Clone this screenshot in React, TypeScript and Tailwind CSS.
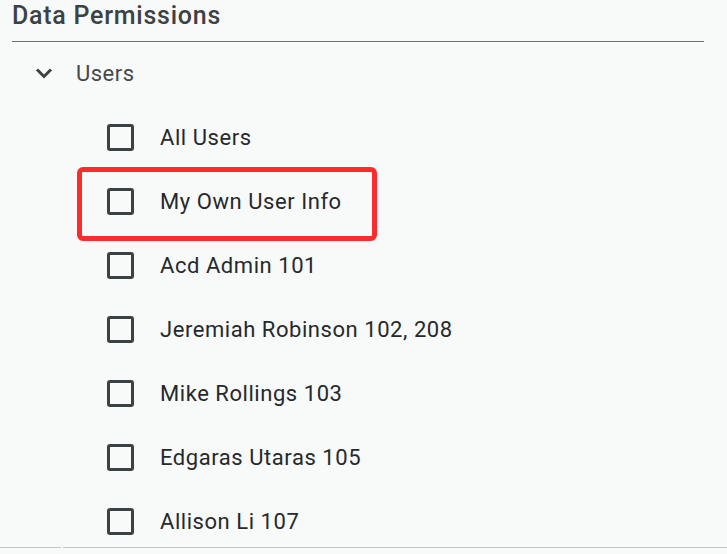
import React from 'react';

const users = [
  'All Users',
  'My Own User Info',
  'Acd Admin 101',
  'Jeremiah Robinson 102, 208',
  'Mike Rollings 103',
  'Edgaras Utaras 105',
  'Allison Li 107',
];

const Checkbox: React.FC = () => (
  <div className="w-[27px] h-[27px] rounded-[3px] border-[3px] border-[#3c4244] bg-transparent shrink-0" />
);

export default function App() {
  return (
    <div
      className="relative w-[727px] h-[554px] overflow-hidden bg-[#f8f9f9]"
      style={{ fontFamily: 'Roboto, "Liberation Sans", sans-serif' }}
    >
      {/* Header */}
      <div className="pl-[12px] h-[30px] flex items-center text-[25px] font-medium tracking-[0.75px] text-[#3c4244] leading-none">
        Data Permissions
      </div>
      <div className="ml-[12px] w-[692px] h-px bg-[#6f7171] mt-[11px]" />

      {/* Group */}
      <div className="flex items-center h-[64px] -mt-px">
        <div className="w-[76px] flex justify-end pr-[23px]">
          <svg width="18" height="12" viewBox="0 0 18 12" className="text-[#3c4244]">
            <path d="M2 2.5 L9 9.5 L16 2.5" fill="none" stroke="currentColor" strokeWidth="3" />
          </svg>
        </div>
        <span className="text-[22px] tracking-[0.5px] text-[#45494b]">Users</span>
      </div>

      <div className="flex flex-col">
        {users.map(u => (
          <div key={u} className="flex items-center h-[64px] pl-[107px]">
            <Checkbox />
            <span className="ml-[26px] text-[22px] tracking-[0.55px] text-[#26292b]">{u}</span>
          </div>
        ))}
      </div>

      {/* Highlight annotation */}
      <div className="absolute left-[77px] top-[167px] w-[300px] h-[74px] rounded-[6px] border-[5px] border-[#fd2b2e] pointer-events-none" />

      {/* Bottom edge */}
      <div className="absolute left-0 right-0 top-[547px] flex">
        <div className="w-[61px] h-px bg-[#c4c6c6]" />
        <div className="w-[2px]" />
        <div className="flex-1 h-px bg-[#c4c6c6]" />
      </div>
    </div>
  );
}
